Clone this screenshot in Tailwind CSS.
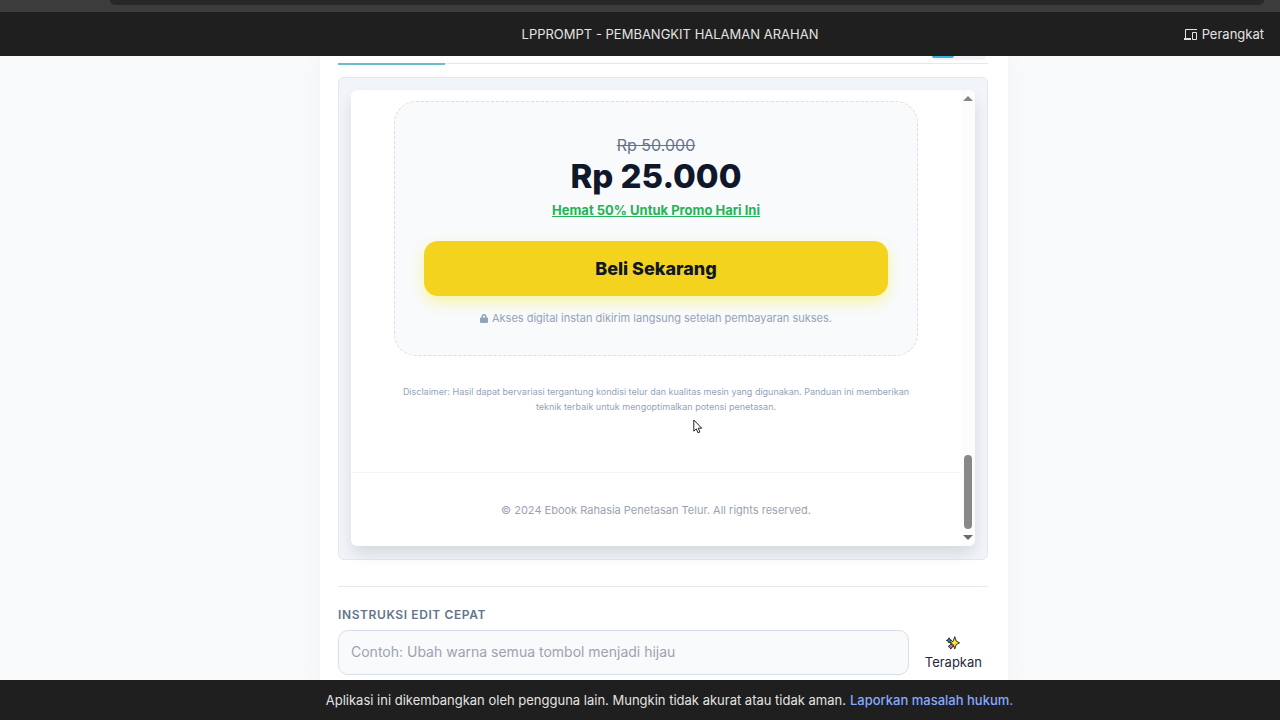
<!DOCTYPE html>
<html lang="id">
  <head>
    <meta charset="UTF-8" />
    <meta name="viewport" content="width=device-width, initial-scale=1.0" />
    <title>LPPROMPT - Pembangkit Halaman Arahan</title>
    <script src="https://cdn.jsdelivr.net/npm/@tailwindcss/browser@4"></script>
  </head>
  <body class="flex h-screen flex-col overflow-hidden bg-[#f8fafc] font-['Inter',sans-serif]">
    <!-- browser bar -->
    <div class="h-3 shrink-0 bg-[#3c3c3c] pr-4 pl-[110px]">
      <div class="h-[5px] rounded-b-xl bg-[#282828]"></div>
    </div>

    <header class="grid h-11 shrink-0 grid-cols-[1fr_auto_1fr] items-center bg-[#1f1f1f] px-4 pt-px text-[#e3e3e3]">
      <h1 class="col-start-2 pl-[60px] text-[13px]">LPPROMPT - PEMBANGKIT HALAMAN ARAHAN</h1>
      <button class="flex items-center gap-1 justify-self-end text-[13px]">
        <svg class="h-[14px] w-[14px]" viewBox="0 0 14 14" fill="none" stroke="currentColor">
          <path d="M13 1.500H1.500V11M8.500 4.500h4v7h-4z" />
          <path stroke-width="2" d="M0 11h7" />
        </svg>
        Perangkat
      </button>
    </header>

    <main class="min-h-0 flex-1 overflow-hidden pl-12">
      <section class="mx-auto w-full max-w-[688px] bg-white pr-5 pb-4 pl-[18px] shadow-[0_0_24px_rgba(15,23,42,0.04)]">
        <!-- bottom edge of the tabs -->
        <div class="flex h-2 items-start justify-between border-b border-[#e2e8f0]">
          <div class="h-[9px] w-[107px] border-b-2 border-[#6cbccd]"></div>
          <div class="mr-[2px] flex h-1 w-[54px] rounded-b bg-[#f1f5f9]">
            <div class="h-[2px] w-[22px] rounded-b bg-[#38b2d8]"></div>
          </div>
        </div>

        <!-- preview -->
        <div class="mt-[13px] rounded-md border border-[#e2e8f0] bg-[#f1f5f9] px-3 pt-3 pb-[13px]">
          <div class="flex overflow-hidden rounded-md bg-white shadow-[0_8px_16px_-2px_rgba(15,23,42,0.14)]">
            <div class="flex-1 pt-[11px] text-center">
              <div class="mx-auto max-w-[524px] rounded-[22px] border border-dashed border-[#d9dfe6] bg-[#f8fafc] px-[29px] pt-[33px] pb-[27px]">
                <p class="text-base leading-5 text-[#64748b] line-through">Rp 50.000</p>
                <p class="mt-px text-[33px] leading-10 font-extrabold text-[#0f172a]">Rp 25.000</p>
                <p class="mt-1 text-[13px] leading-5 font-bold text-[#22b455] underline">Hemat 50% Untuk Promo Hari Ini</p>
                <button class="mt-[21px] h-[55px] w-full rounded-[14px] bg-[#f4d31f] text-lg font-extrabold text-[#111827] shadow-[0_6px_14px_rgba(250,240,60,0.45)]">Beli Sekarang</button>
                <p class="mt-3 flex items-center justify-center gap-1 text-[11px] leading-5 text-[#94a3b8]">
                  <svg class="h-[9px] w-2" viewBox="0 0 16 18" fill="currentColor">
                    <path fill-rule="evenodd" d="M3 7V5a5 5 0 0 1 10 0v2h1a2 2 0 0 1 2 2v7a2 2 0 0 1-2 2H2a2 2 0 0 1-2-2V9a2 2 0 0 1 2-2zm3 0h4V5a2 2 0 0 0-4 0z" />
                  </svg>
                  Akses digital instan dikirim langsung setelah pembayaran sukses.
                </p>
              </div>
              <p class="mx-auto mt-7 max-w-[524px] text-[9px] leading-[15px] text-[#94a3b8]">
                Disclaimer: Hasil dapat bervariasi tergantung kondisi telur dan kualitas mesin yang digunakan. Panduan ini memberikan teknik terbaik untuk mengoptimalkan potensi penetasan.
              </p>
              <footer class="mt-[58px] border-t border-[#f1f5f9] pt-[27px] pb-[26px] text-[11px] leading-5 text-[#9ca3af]">
                © 2024 Ebook Rahasia Penetasan Telur. All rights reserved.
              </footer>
            </div>
            <!-- scrollbar -->
            <div class="flex w-[14px] flex-col items-center bg-[#fcfcfc] py-[6px]">
              <svg class="h-[5px] w-[10px]" viewBox="0 0 10 5" fill="#858585"><path d="M0 5 5 0l5 5z" /></svg>
              <div class="mt-auto mb-[6px] h-[74px] w-2 rounded-full bg-[#888888]"></div>
              <svg class="h-[5px] w-[10px]" viewBox="0 0 10 5" fill="#6b6b6b"><path d="M0 0 5 5l5-5z" /></svg>
            </div>
          </div>
        </div>

        <!-- quick edit -->
        <form class="mt-[26px] border-t border-[#e5e9ee] pt-[18px]">
          <label for="instruksi" class="block text-xs leading-5 font-semibold tracking-wider text-[#64748b]">INSTRUKSI EDIT CEPAT</label>
          <div class="mt-[5px] flex items-start gap-[10px]">
            <input
              id="instruksi"
              type="text"
              placeholder="Contoh: Ubah warna semua tombol menjadi hijau"
              class="h-[45px] min-w-0 flex-1 rounded-[10px] border border-[#d9dee6] bg-[#f8fafc] px-3 pb-[2px] text-sm placeholder:text-[#9ca3af]"
            />
            <button type="button" class="flex flex-col items-center gap-[2px] px-[6px] pt-[6px] text-[13px] leading-5 text-[#1f2937]">
              <svg class="h-[14px] w-[14px]" viewBox="0 0 16 16" stroke="#111111" stroke-linejoin="round">
                <path fill="#2f8fb0" d="M3.500 2 4.500 4 6.500 5 4.500 6 3.500 8 2.500 6 .5 5l2-1z" />
                <path fill="#d872b8" d="m5.500 9 1 1.500L8.500 12l-2 1-1 2-1-2-2-1 2-1.500z" />
                <path fill="#ffe52e" d="m10 .8 1.700 5 3.800 2-3.800 2-1.700 5-1.700-5-3.800-2 3.800-2z" />
              </svg>
              Terapkan
            </button>
          </div>
        </form>
      </section>
    </main>

    <footer class="flex h-10 shrink-0 items-center justify-center gap-1 bg-[#1f1f1f] pt-[2px] pl-[59px] text-[13px] text-[#e3e3e3]">
      <span>Aplikasi ini dikembangkan oleh pengguna lain. Mungkin tidak akurat atau tidak aman.</span>
      <a href="#" class="font-medium text-[#87a9ff]">Laporkan masalah hukum.</a>
    </footer>

    <!-- mouse pointer -->
    <svg class="absolute top-[419px] left-[693px] h-[15px] w-[10px]" viewBox="0 0 10 15" fill="white" stroke="#222222">
      <path d="M.8 1v11.200l2.500-2.300 1.700 3.900 1.900-.8-1.700-3.800h3.500z" />
    </svg>
  </body>
</html>
